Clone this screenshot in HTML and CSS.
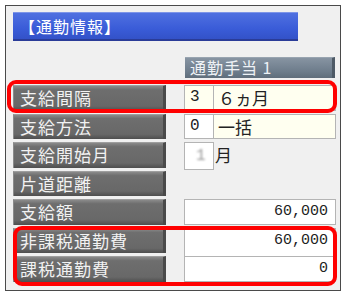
FILE: index.html
```html
<!DOCTYPE html>
<html lang="ja">
<head>
  <meta charset="UTF-8">
  <title>通勤情報</title>
  <link rel="stylesheet" href="styles.css">
</head>
<body>
  <div class="frame">
    <div class="title-bar">【通勤情報】</div>

    <div class="col-head">通勤手当 1</div>

    <div class="grid">
      <div class="label">支給間隔</div>
      <div class="code cream">3</div>
      <div class="value cream">６ヵ月</div>

      <div class="label">支給方法</div>
      <div class="code">0</div>
      <div class="value cream">一括</div>

      <div class="label">支給開始月</div>
      <div class="code tall"><span class="spin">1</span></div>
      <div class="value bare">月</div>

      <div class="label">片道距離</div>
      <div class="empty"></div>

      <div class="label">支給額</div>
      <div class="amount">60,000</div>

      <div class="label">非課税通勤費</div>
      <div class="amount join">60,000</div>

      <div class="label">課税通勤費</div>
      <div class="amount">0</div>
    </div>

    <div class="mark mark-top"></div>
    <div class="mark mark-bottom"></div>
  </div>
</body>
</html>
```

FILE: styles.css
```css
/* Base */
body {
  margin: 0;
  background: #fff;
  font-family: "Noto Sans CJK JP", "Noto Sans", sans-serif;
}
.frame {
  position: relative;
  margin: 5px;
  width: 336px;
  height: 286px;
  box-sizing: border-box;
  border: 1px solid #4a4a4a;
  background: #f0f0f0;
  padding: 6px 0 0 7px;
}
.title-bar {
  width: 285px;
  height: 29px;
  box-sizing: border-box;
  background: linear-gradient(#4f70e0, #3a5cd8 60%, #3352c8);
  border-top: 1px solid #7d95e8;
  border-bottom: 2px solid #2a3c98;
  color: #fff;
  font-size: 16px;
  letter-spacing: 1px;
  line-height: 26px;
  padding-left: 6px;
  margin-bottom: 16px;
}
.col-head {
  width: 150px;
  height: 21px;
  margin: 0 0 7px 172px;
  box-sizing: border-box;
  background: linear-gradient(#8794a2, #6c7b8a 70%, #5f6d7b);
  border-right: 3px solid #4e5a66;
  border-top: 1px solid #98a4b0;
  color: #eef2f6;
  font-size: 16px;
  letter-spacing: 1px;
  line-height: 19px;
  padding-left: 5px;
  white-space: pre;
}
/* Table */
.grid {
  display: grid;
  grid-template-columns: 171px 30px 122px;
  grid-auto-rows: 25.5px;
  row-gap: 3px;
}
.label {
  width: 153px;
  box-sizing: border-box;
  background: linear-gradient(#8a8a8a, #6e6e6e 15%, #686868 80%, #4e4e4e);
  border-top: 1px solid #9e9e9e;
  border-left: 1px solid #8a8a8a;
  border-right: 3px solid #4a4a4a;
  color: #f2f2f2;
  font-size: 17px;
  letter-spacing: 1px;
  line-height: 24px;
  padding-left: 6px;
  white-space: nowrap;
}
.code, .value, .amount {
  box-sizing: border-box;
  border: 1px solid #b4b4b4;
  background: #fff;
  color: #222;
}
.code {
  font-family: "Liberation Mono", monospace;
  font-size: 16px;
  line-height: 23px;
  padding-left: 5px;
}
.code.tall {
  height: 28px;
}
.value {
  border-left: none;
  font-size: 17px;
  line-height: 23px;
  padding-left: 4px;
  white-space: nowrap;
}
.cream {
  background: #fffff0;
}
.value.bare {
  border: none;
  background: none;
  padding-left: 1px;
  line-height: 25px;
}
.spin {
  display: inline-block;
  margin-left: 6px;
  margin-top: 2px;
  color: #999;
  filter: blur(1px);
}
.empty {
  grid-column: 2 / 4;
}
.amount {
  grid-column: 2 / 4;
  text-align: right;
  font-family: "Liberation Mono", monospace;
  font-size: 15px;
  line-height: 24px;
  padding-right: 7px;
}
.amount.join {
  margin-bottom: -3px;
  border-bottom: none;
}
/* Red highlight marks */
.mark {
  position: absolute;
  box-sizing: border-box;
  border: 4px solid #ff0000;
  border-radius: 9px;
}
.mark-top {
  left: 1px;
  top: 74px;
  width: 330px;
  height: 33px;
}
.mark-bottom {
  left: 7px;
  top: 220px;
  width: 324px;
  height: 60px;
}
```
